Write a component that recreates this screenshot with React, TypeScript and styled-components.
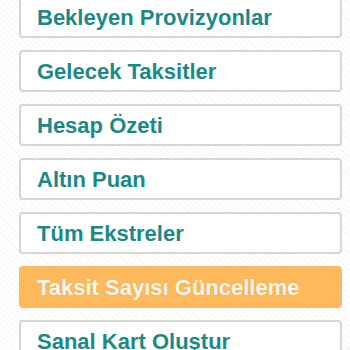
import styled, { createGlobalStyle } from "styled-components";

const GlobalStyle = createGlobalStyle`
  html, body {
    margin: 0;
    padding: 0;
  }
  body {
    font-family: "Liberation Sans", Arial, sans-serif;
    background-color: #ffffff;
    background-image: repeating-linear-gradient(
      45deg,
      #ffffff 0px,
      #ffffff 3px,
      #f6f6f6 3px,
      #f6f6f6 4px
    );
    min-height: 350px;
  }
`;

const items = [
  "Bekleyen Provizyonlar",
  "Gelecek Taksitler",
  "Hesap Özeti",
  "Altın Puan",
  "Tüm Ekstreler",
  "Taksit Sayısı Güncelleme",
  "Sanal Kart Oluştur",
];

const ACTIVE = "Taksit Sayısı Güncelleme";

const Menu = () => {
  return (
    <Container>
      {items.map((label) => (
        <MenuButton key={label} $active={label === ACTIVE}>
          {label}
        </MenuButton>
      ))}
    </Container>
  );
};

export default function App() {
  return (
    <>
      <GlobalStyle />
      <Menu />
    </>
  );
}

const Container = styled.div`
  display: flex;
  flex-direction: column;
  gap: 12px;
  margin-top: -4px;
  padding: 0 8px 0 19px;
`;

const MenuButton = styled.div<{ $active?: boolean }>`
  box-sizing: border-box;
  height: 42px;
  display: flex;
  align-items: center;
  padding: 1px 16px 0;
  border-radius: 4px;
  border: 2px solid ${(p) => (p.$active ? "#fdb95c" : "#d6d6d6")};
  background: ${(p) => (p.$active ? "#fdb95c" : "#ffffff")};
  color: ${(p) => (p.$active ? "#fff8ee" : "#1b8a86")};
  font-size: 22px;
  font-weight: bold;
  white-space: nowrap;
  text-shadow: ${(p) => (p.$active ? "0 0 1px rgba(180,110,20,0.4)" : "none")};
  cursor: pointer;
`;
